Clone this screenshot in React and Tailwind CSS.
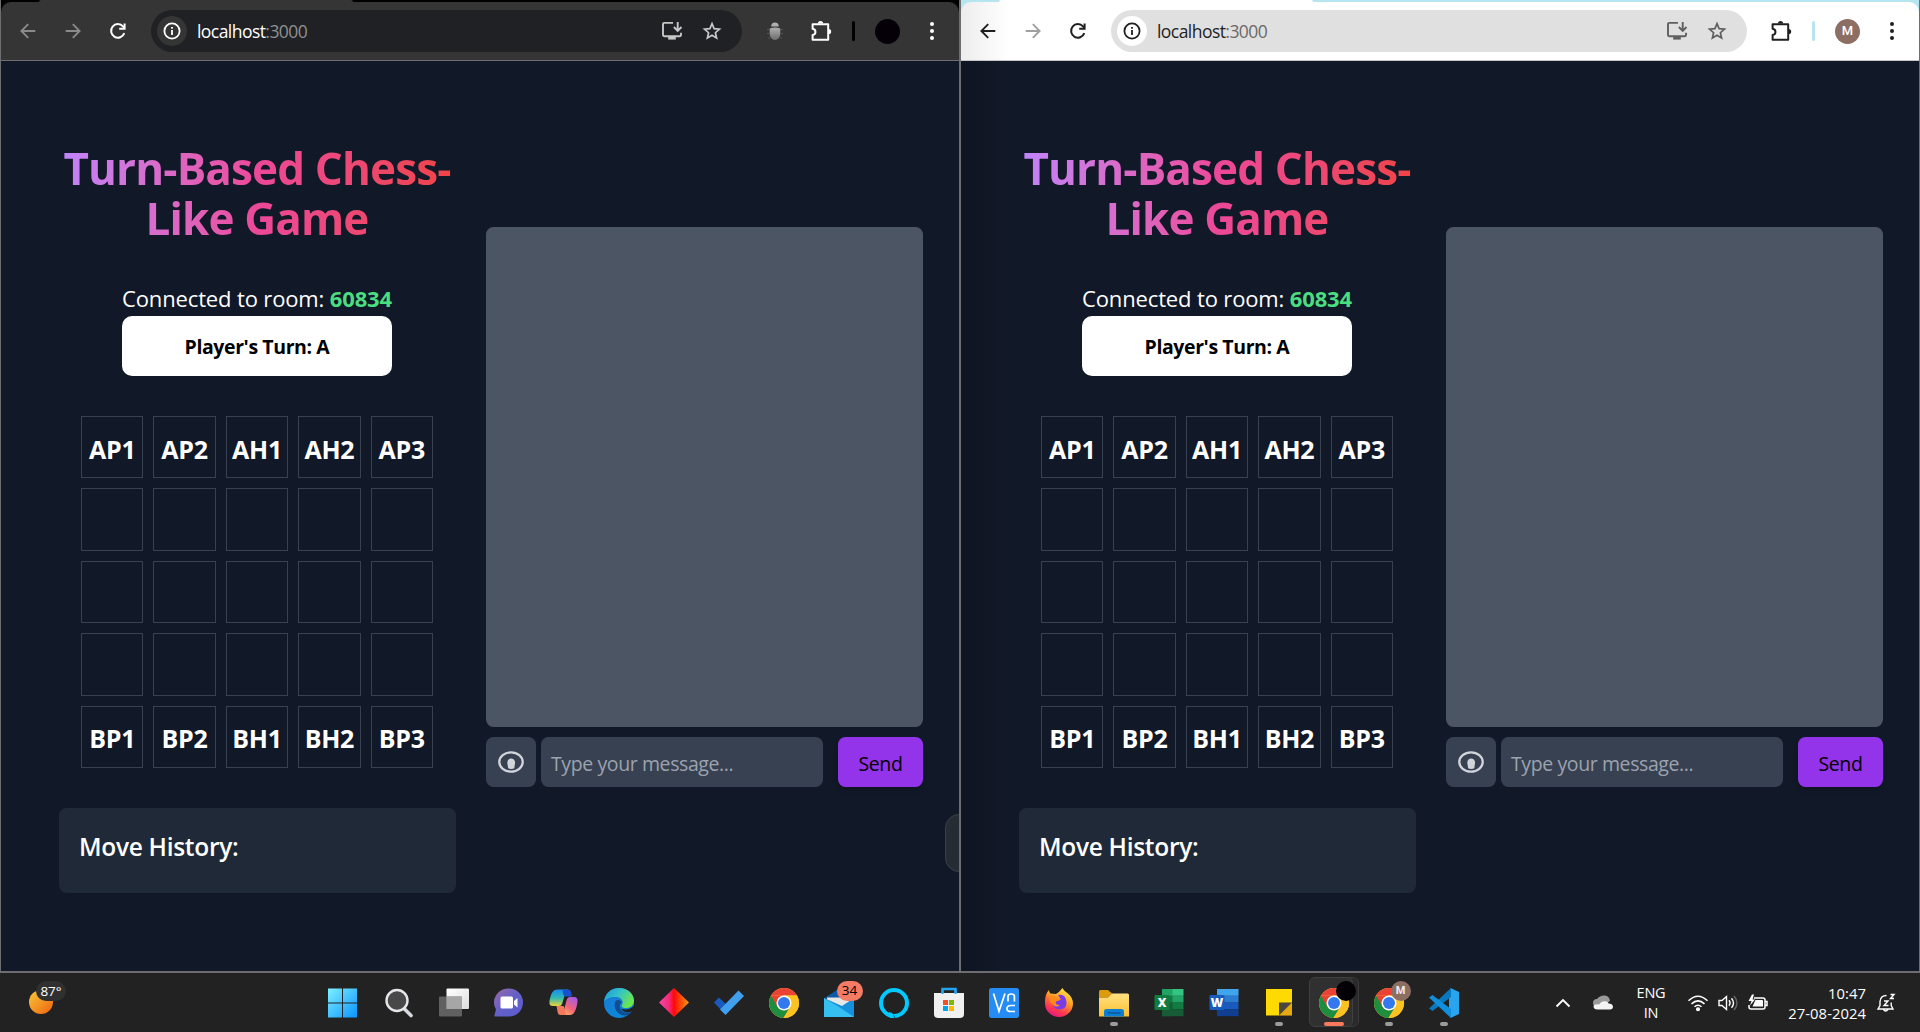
import React from "react";

const ROWS = [
  ["AP1", "AP2", "AH1", "AH2", "AP3"],
  ["", "", "", "", ""],
  ["", "", "", "", ""],
  ["", "", "", "", ""],
  ["BP1", "BP2", "BH1", "BH2", "BP3"],
];

/* ---------- browser toolbar icons ---------- */

function Arrow({ className, flip }) {
  return (
    <svg viewBox="0 0 20 20" className={`h-5 w-5 shrink-0 ${className} ${flip ? "-scale-x-100" : ""}`} fill="none" stroke="currentColor" strokeWidth="1.9">
      <path d="M17.3 10H3.8M10.2 3.2 3.4 10l6.8 6.8" />
    </svg>
  );
}

function Reload() {
  return (
    <svg viewBox="0 0 20 20" className="h-5 w-5 shrink-0" fill="none" stroke="currentColor" strokeWidth="2">
      <path d="M16.3 12.2A6.8 6.8 0 1 1 15 5.4l1.2 1.4" />
      <path d="M16.6 2.4v5.4h-5.4" />
    </svg>
  );
}

function Info() {
  return (
    <svg viewBox="0 0 20 20" className="h-5 w-5" fill="none" stroke="currentColor" strokeWidth="1.8">
      <circle cx="10" cy="10" r="7.6" />
      <path d="M10 9v5M10 5.9v1.9" />
    </svg>
  );
}

function Install() {
  return (
    <svg viewBox="0 0 22 20" className="h-5 w-[22px]" fill="none" stroke="currentColor" strokeWidth="1.9">
      <path d="M12 1.9H3.2a1.2 1.2 0 0 0-1.2 1.2v11a1.2 1.2 0 0 0 1.2 1.2h15.6a1.2 1.2 0 0 0 1.2-1.2v-2.4" />
      <path d="M16.7 1v8.4M12.9 6l3.8 3.8L20.5 6" />
      <path d="M7.2 17.3h7.6" strokeWidth="2.6" />
    </svg>
  );
}

function Star() {
  return (
    <svg viewBox="0 0 20 20" className="h-5 w-5" fill="none" stroke="currentColor" strokeWidth="1.7">
      <path d="m10 2.6 2.1 5 5.4.5-4.1 3.6 1.2 5.3-4.6-2.8L5.400 17l1.2-5.300L2.500 8.100l5.400-.5z" />
    </svg>
  );
}

function Puzzle() {
  return (
    <svg viewBox="0 0 22 22" className="h-[22px] w-[22px]">
      <path d="M2.600 4.200h15.600v15.600H2.600v-4.800c3.800-.6 3.800-5.600 0-6.200z" fill="none" stroke="currentColor" strokeWidth="2" strokeLinejoin="round" />
      <path d="M7.900 3.600a2.600 2.600 0 0 1 5.200 0zM18.600 8.900a2.600 2.600 0 0 1 0 5.200z" fill="currentColor" />
    </svg>
  );
}

function Bug() {
  return (
    <svg viewBox="0 0 18 20" className="h-5 w-[18px]">
      <defs><linearGradient id="bug" x1="0" y1="0" x2="0" y2="1"><stop stopColor="#b0b0b0" /><stop offset="1" stopColor="#6c6c6c" /></linearGradient></defs>
      <path d="M5.200 5.400a3.800 3.900 0 0 1 7.600 0z" fill="#b0b0b0" />
      <path d="M3.700 7.600q5.300-2.200 10.600 0v4.600c0 9-10.600 9-10.600 0z" fill="url(#bug)" />
      <path d="M1 8.500h2M1 12.500h2M2 17h2M15 8.500h2M15 12.500h2M14 17h2" stroke="#555" strokeWidth="1" />
    </svg>
  );
}

function Toolbar({ dark }) {
  return (
    <div className={`flex h-[61px] shrink-0 flex-col border-b ${dark ? "border-[#6e6e6e] bg-black" : "border-[#c6c6c6] bg-[#b5e6ef]"}`}>
      <div className="flex h-[2px] shrink-0 pl-[38px]">
        <div className={`h-full w-[314px] rounded-t-sm ${dark ? "bg-[#353535]" : "bg-white"}`} />
      </div>
      <div className={`flex h-[58px] items-center rounded-t-[10px] ${dark ? "bg-[#353535] text-white" : "bg-linear-to-r from-[#ededed] via-white via-5% to-white text-[#1f1f1f]"}`}>
        <Arrow className={`ml-[17px] ${dark ? "text-[#8a8a8a]" : "text-[#1f1f1f]"}`} />
        <Arrow flip className={`ml-[25px] ${dark ? "text-[#8a8a8a]" : "text-[#a0a0a0]"}`} />
        <div className="ml-[25px]"><Reload /></div>
        <div className={`ml-[23px] flex h-[42px] items-center rounded-full pl-1.5 ${dark ? "w-[591px] bg-[#202124]" : "w-[636px] bg-[#e0e0e0]"}`}>
          <span className={`flex h-[30px] w-[30px] items-center justify-center rounded-full ${dark ? "bg-[#353535]" : "bg-white"}`}><Info /></span>
          <span className="ml-[10px] grow font-['Open_Sans'] text-[17.5px] tracking-[-0.55px]">
            localhost<span className={dark ? "text-[#8f8f8f]" : "text-[#6a6a6a]"}>:3000</span>
          </span>
          <span className={`flex items-center gap-[19px] pr-5 ${dark ? "text-[#c7c7c7]" : "text-[#5f5f5f]"}`}><Install /><Star /></span>
        </div>
        <div className={`flex w-[35px] justify-end ${dark ? "ml-[7px]" : "hidden"}`}><Bug /></div>
        <div className={dark ? "ml-[26px]" : "ml-[23px]"}><Puzzle /></div>
        <div className={`ml-5 h-5 w-[3px] rounded ${dark ? "bg-black" : "bg-[#b5e6ef]"}`} />
        <div className={`ml-5 flex h-[25px] w-[25px] items-center justify-center rounded-full font-[Roboto] text-[13px] font-medium ${dark ? "bg-[#050008]" : "bg-[#8d6e63] text-white"}`}>
          {dark ? "" : "M"}
        </div>
        <div className="ml-[30px] flex w-1 flex-col gap-[3px]">
          <i className="h-1 w-1 rounded-full bg-current" /><i className="h-1 w-1 rounded-full bg-current" /><i className="h-1 w-1 rounded-full bg-current" />
        </div>
      </div>
    </div>
  );
}

/* ---------- game page ---------- */

function Game({ dark }) {
  return (
    <div className="relative flex grow overflow-hidden bg-[#111827] font-['Open_Sans',sans-serif] text-white">
      <section className="ml-[58px] flex w-[396px] shrink-0 flex-col items-center pt-[82px]">
        <h1 className="bg-linear-to-r from-[#c084fc] via-[#ec4899] to-[#ef4444] bg-clip-text px-1 text-center text-[44px] leading-[50px] font-bold tracking-[-0.85px] whitespace-nowrap text-transparent">
          Turn-Based Chess-<br />Like Game
        </h1>
        <p className="mt-[38px] text-[22px] leading-[35px] tracking-[-0.14px] whitespace-nowrap">
          Connected to room: <b className="text-[#4ade80]">60834</b>
        </p>
        <div className="flex h-[60px] w-[270px] items-center justify-center rounded-[10px] bg-white pt-0.5 text-[19.5px] font-bold tracking-[-0.4px] text-black">Player's Turn: A</div>
        <div className="mt-10 grid h-[352px] w-[352px] grid-cols-5 grid-rows-5 gap-[10px]">
          {ROWS.flat().map((t, i) => (
            <div key={i} className="flex items-center justify-center border border-[#374151] pt-1 text-[25px] leading-none font-bold tracking-[-0.25px]">{t}</div>
          ))}
        </div>
        <div className="mt-10 flex h-[85px] w-[397px] shrink-0 self-start rounded-[7.5px] bg-[#1f2937] pt-[21px] pl-5 text-[24.5px] leading-[35px] font-semibold tracking-[-0.3px]">Move History:</div>
      </section>
      <section className="ml-[31px] w-[437px] pt-[166px]">
        <div className="h-[500px] rounded-[7.5px] bg-[#4b5563]" />
        <div className="mt-[10px] flex h-[50px] text-[19.5px]">
          <button className="flex w-[50px] items-center justify-center rounded-[7.5px] bg-[#374151]">
            <svg viewBox="0 0 26 22" className="h-[22px] w-[26px]">
              <ellipse cx="13" cy="11" rx="11.700" ry="9.600" fill="none" stroke="#d1d5db" strokeWidth="2.300" />
              <path d="M9.300 11.500c.2-5.400 7.600-5.400 7.800 0 .1 2-.7 2.900-.7 5.800q-3.200 1.300-6.300 0c0-2.500-.8-3.600-.8-5.800z" fill="#d1d5db" />
            </svg>
          </button>
          <div className="ml-[5px] flex w-[282px] items-center rounded-[7.5px] bg-[#374151] pt-[3px] pl-[10px] tracking-[-0.4px] text-[#9ca3af]">Type your message...</div>
          <button className="ml-[15px] w-[85px] rounded-[7.5px] bg-[#9333ea] pt-[3px] tracking-[-0.4px] text-black shadow-md">Send</button>
        </div>
      </section>
      {dark ? (
        <div className="absolute top-[753px] -right-4 h-[58px] w-[30px] rounded-[14px] border border-[#3a4146] bg-[#262c33]" />
      ) : (
        <div className="absolute inset-y-0 left-0 w-10 bg-linear-to-r from-black/15 to-transparent" />
      )}
    </div>
  );
}

function Browser({ dark }) {
  return (
    <div className="flex h-[973px] w-[960px] flex-col border-x border-b-2 border-[#6e6e72]">
      <Toolbar dark={dark} />
      <Game dark={dark} />
    </div>
  );
}

/* ---------- taskbar icons, drawn on a 32px grid ---------- */

function Svg({ children }) {
  return <svg viewBox="0 0 32 32" className="h-8 w-8">{children}</svg>;
}

const Start = () => (
  <Svg>
    <defs>
      <linearGradient id="win" x1="0" y1="0" x2="1" y2="1" gradientUnits="objectBoundingBox"><stop stopColor="#7df0ff" /><stop offset="1" stopColor="#0a93ff" /></linearGradient>
    </defs>
    <path d="M2 1.500h14v14H2zM17 1.500h14v14H17zM2 16.500h14v14H2zM17 16.500h14v14H17z" fill="url(#win)" />
  </Svg>
);
const Search = () => (
  <Svg>
    <path d="m21.500 22 6.500 6.500" stroke="#d6d9de" strokeWidth="3.600" strokeLinecap="round" />
    <circle cx="14" cy="13.500" r="10.500" fill="#484848" stroke="#e4e6ea" strokeWidth="2.400" />
  </Svg>
);
const TaskView = () => (
  <Svg>
    <defs><linearGradient id="tv" x1="0" y1="0" x2="1" y2="1"><stop stopColor="#fff" /><stop offset="1" stopColor="#dedede" /></linearGradient></defs>
    <rect x="8.500" y="1.500" width="22.500" height="20.500" rx="1" fill="url(#tv)" />
    <rect x="1" y="9.500" width="23" height="20" rx="1" fill="#6b6b6b" fillOpacity=".85" />
    <path d="M8.500 9.500H24V22H8.500z" fill="#a6a6a6" />
  </Svg>
);
const Chat = () => (
  <Svg>
    <defs><linearGradient id="chat" x1="0" y1="0" x2="1" y2="1"><stop stopColor="#9a6aa4" /><stop offset=".5" stopColor="#6460c8" /><stop offset="1" stopColor="#5a5bd0" /></linearGradient></defs>
    <path d="M16 1.500a14 14 0 0 1 0 28H2q-.8 0-.5-1.500l1.500-5.500A14 14 0 0 1 16 1.500z" fill="url(#chat)" />
    <rect x="7.500" y="9.500" width="12.500" height="12" rx="1.500" fill="#fff" />
    <path d="m21 14 3.500-3v9.500L21 17.500z" fill="#fff" />
  </Svg>
);
const Copilot = () => (
  <Svg>
    <defs>
      <linearGradient id="cpa" x1="0" y1="0" x2="0" y2="1"><stop stopColor="#1a8df2" /><stop offset=".5" stopColor="#2fb7b5" /><stop offset="1" stopColor="#e8d33a" /></linearGradient>
      <linearGradient id="cpb" x1=".8" y1="0" x2=".2" y2="1"><stop stopColor="#a45ae8" /><stop offset=".55" stopColor="#f0627c" /><stop offset="1" stopColor="#ffb257" /></linearGradient>
    </defs>
    <path d="M9.500 2.500H20q-2 1-3 5l-2.800 9Q13.500 19 11 19H4.500c-3.500 0-3.500-3.500-2.500-7.500S4.500 2.500 9.500 2.500z" fill="url(#cpa)" />
    <path d="M14.500 2.500H20q2.700 0 3.200 3l.8 4h-6.500q-2.500 0-3-7z" fill="#1a50cf" />
    <path d="M22 28H12.500q2.500-1 3.500-5l2.500-9.500Q19.300 10 22 10h4.500c3.500 0 3.500 4 2.500 8s-2.500 10-7 10z" fill="url(#cpb)" />
    <path d="M18 28h-5.500Q10 28 9.500 24.500L8.500 19H15q1.500 0 1.200 3z" fill="#f4795c" />
  </Svg>
);
const Edge = () => (
  <Svg>
    <defs>
      <linearGradient id="ea" x1="0" y1="0" x2="1" y2=".5"><stop stopColor="#1895dc" /><stop offset=".5" stopColor="#35c1c8" /><stop offset="1" stopColor="#6ae650" /></linearGradient>
      <linearGradient id="eb" x1="0" y1="0" x2="0" y2="1"><stop stopColor="#1d78d4" /><stop offset="1" stopColor="#0b87da" /></linearGradient>
    </defs>
    <circle cx="16" cy="16" r="15" fill="url(#eb)" />
    <path d="M1 15C2 6 8 1 16 1c9 0 15 6 15 12.500 0 5-3.500 7.500-8 7.500-3.500 0-5-1.500-4-3 2-3 0-7.500-5.500-8C8 9.500 3 11 1 15z" fill="url(#ea)" />
    <path d="M12.500 14c-2.800 7 2 14.500 9.500 14.500 3 0 5.500-1.500 7-4-5 2-10.500 1-12-3.500-.8-2.600.5-4.500 1.800-6-1.500-2-4.500-3-6.300-1z" fill="#114e91" />
    <path d="M29.300 24.300c-4.500 1.700-9.500 1-11.500-3 1 1.500 9 2.500 12.700-2.500L32 22z" fill="#222" />
  </Svg>
);
const Diamond = () => (
  <Svg>
    <defs><linearGradient id="dia"><stop stopColor="#f94a9f" /><stop offset=".33" stopColor="#f32a80" /><stop offset=".5" stopColor="#ff0808" /><stop offset="1" stopColor="#ff9a10" /></linearGradient></defs>
    <path d="M16 1 31 15.500 16 30 1 15.500z" fill="url(#dia)" />
  </Svg>
);
const Todo = () => (
  <Svg>
    <path d="m1 15.500 5-5 9 8.500-5 6z" fill="#185abd" />
    <path d="M7 22.500 25.500 3.500l5.500 5.500-18.500 19z" fill="#41a0ee" />
  </Svg>
);
const ChromeIcon = () => (
  <Svg>
    <circle cx="16" cy="16" r="15" fill="#fcc934" />
    <path d="M3 8.500A15 15 0 0 1 29 8.500H16z" fill="#ea4335" />
    <path d="M3 8.500a15 15 0 0 0 12.500 22.500L22.500 19.500 16 22z" fill="#1e8e3e" />
    <path d="M3 8.500 9.500 19.700 16 8.500z" fill="#ea4335" />
    <path d="M16 8.500h13a15 15 0 0 1-13.500 22.500l7-11.500z" fill="#fcc221" />
    <circle cx="16" cy="16" r="7.500" fill="#fff" />
    <circle cx="16" cy="16" r="6" fill="#3478f0" />
  </Svg>
);
const Mail = () => (
  <Svg>
    <path d="m1 11.500 15-10 15 10z" fill="#0d5ba8" />
    <path d="M4 10.500h24V22H4z" fill="#e6e6e6" />
    <path d="M1 11v19h30V11L19 19z" fill="#1590dc" />
    <path d="M1 11v19h30L16 20z" fill="#36c0f2" />
  </Svg>
);
const Alexa = () => (
  <Svg>
    <circle cx="16" cy="16" r="13" fill="none" stroke="#00caff" strokeWidth="4" />
    <path d="M14 25.500v5l2.500.5V29z" fill="#222" />
    <path d="M11 25c4 1 5 2.500 5 6-3 .5-6-1-7-2z" fill="#00caff" />
  </Svg>
);
const Store = () => (
  <Svg>
    <path d="M9.500 7V2h13v5" fill="none" stroke="#21a7ef" strokeWidth="2.500" />
    <path d="M1 6h30v21q0 4-4 4H5q-4 0-4-4z" fill="#f0f0f0" />
    <path d="M9.500 3v4M22.500 3v4" stroke="#21a7ef" strokeWidth="2" />
    <path d="M10 13h5v5h-5z" fill="#f25022" /><path d="M16 13h5v5h-5z" fill="#7fba00" />
    <path d="M10 19h5v5h-5z" fill="#00a4ef" /><path d="M16 19h5v5h-5z" fill="#ffb900" />
  </Svg>
);
const Vnc = () => (
  <Svg>
    <rect x="1" y="1" width="30" height="30" rx="2.500" fill="#258cf4" />
    <g fill="none" stroke="#fff" strokeWidth="1.700"><path d="M5.500 6.500 11 24.300 17 6.500" /><path d="M20 14.500V9.300q0-2.300 3.200-2.300t3.200 2.300v5.200M27 18.500h-4q-4 0-4 3v.5q0 2.500 4 2.500h4" /></g>
  </Svg>
);
const Firefox = () => (
  <Svg>
    <defs><linearGradient id="ff" x1=".8" y1="0" x2=".3" y2="1"><stop stopColor="#fff04a" /><stop offset=".4" stopColor="#ffa125" /><stop offset=".75" stopColor="#ff3a4e" /><stop offset="1" stopColor="#e31587" /></linearGradient></defs>
    <path d="M19.500 1c1.500 2.500 2.500 3.500 6 6q4.500 4 4.500 9.500a14 13.500 0 0 1-28 0C2 10 3 6 6 3q0 2.500 1.500 3.500L13 7q3-1.500 6.500-6z" fill="url(#ff)" />
    <path d="M15 8q8-1.500 8.500 7.500 0 7-7.500 7-7-.5-6.500-7.500l4-.5L17.500 12z" fill="#7a3bea" />
    <path d="M6 11q4-3.500 8-1l4 2.500q-3 1.500-5 1.500c-1 3 1 4 4 4-3 3.500-9 1-11-7z" fill="#ff8a1c" />
  </Svg>
);
const Explorer = () => (
  <Svg>
    <defs><linearGradient id="ex" x1="0" y1="0" x2="0" y2="1"><stop stopColor="#ffe082" /><stop offset="1" stopColor="#fcc02e" /></linearGradient></defs>
    <path d="M1 4.500q0-1.500 1.500-1.500H10l4 3.500-4 4H1z" fill="#dc9c0a" />
    <path d="M1 10.500h9l4-4h15.500q1.500 0 1.500 1.500v21.500H1z" fill="url(#ex)" />
    <path d="M6 29.500v-5q0-2.500 2.500-2.500h15q2.500 0 2.500 2.500v5z" fill="#0d7fd2" />
    <path d="M9.500 26h13" stroke="#0959a0" strokeWidth="1.600" />
  </Svg>
);

function Office({ letter, colors }) {
  return (
    <svg viewBox="0 0 32 32" className="h-8 w-8">
      {colors.slice(0, 4).map((c, i) => <rect key={i} x="9" y={2 + i * 6.8} width="21.500" height="6.800" fill={c} />)}
      {letter === "X" && <><rect x="9" y="2" width="10.500" height="6.800" fill="#21a366" /><rect x="9" y="8.800" width="10.500" height="6.800" fill="#107c41" /><rect x="9" y="15.600" width="10.500" height="13.600" fill="#185c37" /></>}
      <rect x="1.500" y="8" width="15" height="15" rx="1" fill={colors[4]} />
      <text x="9" y="20" textAnchor="middle" fontFamily="Open Sans" fontWeight="800" fontSize="12" fill="#fff">{letter}</text>
    </svg>
  );
}
const Excel = () => <Office letter="X" colors={["#33c481", "#21a366", "#107c41", "#185c37", "#107c41"]} />;
const Word = () => <Office letter="W" colors={["#41a5ee", "#2b7cd3", "#185abd", "#103f91", "#185abd"]} />;
const Notes = () => (
  <Svg>
    <path d="M3 2h26v13.500L16 28.500H3z" fill="#ffd902" />
    <path d="M16 15.500h13v13H16z" fill="#4b463d" />
    <path d="m16 28.500 13-13v13z" fill="#e6aa10" />
  </Svg>
);
const VsCode = () => (
  <Svg>
    <path d="M22.500 1 31 5v22l-8.500 4-1.500-6V7z" fill="#29a5f0" />
    <path d="M23 1v9L4.500 24 1 21.500z" fill="#0879be" />
    <path d="M23 31v-9L4.500 8 1 10.500z" fill="#128fda" />
  </Svg>
);

const APPS = [
  [Start, "start"], [Search], [TaskView], [Chat], [Copilot], [Edge], [Diamond], [Todo], [ChromeIcon], [Mail, "mail"], [Alexa],
  [Store], [Vnc], [Firefox], [Explorer, "run"], [Excel], [Word], [Notes, "run"], [ChromeIcon, "active"], [ChromeIcon, "profile"], [VsCode, "run"],
];

function TaskbarApp({ Icon, kind }) {
  const dot = kind === "run" || kind === "profile";
  return (
    <div className={`relative flex h-full w-[55px] shrink-0 items-center justify-center ${kind === "start" ? "mr-[2px]" : ""}`}>
      {kind === "active" && (
        <>
          <span className="absolute top-1 left-[9px] h-[50px] w-[43px] rounded-md border border-[#3a3a3a] bg-[#2a2a2a]" />
          <span className="absolute top-1 left-[2.500px] h-[50px] w-[44px] rounded-md border border-[#404040] bg-[#303030]" />
        </>
      )}
      <div className="relative"><Icon /></div>
      {kind === "mail" && <span className="absolute top-2 left-[25px] flex h-5 w-[26px] items-center justify-center rounded-full bg-[#f47c64] font-['Open_Sans'] text-[13.500px] leading-none text-black">34</span>}
      {kind === "active" && <span className="absolute top-2 left-[29px] h-5 w-5 rounded-full bg-[#030006]" />}
      {kind === "profile" && <span className="absolute top-2 left-[29px] flex h-5 w-5 items-center justify-center rounded-full bg-[#8d6e63] font-[Roboto] text-[11px] font-bold text-[#eee]">M</span>}
      {dot && <span className="absolute bottom-[6px] h-1 w-2 rounded-full bg-[#9b9b9b]" />}
      {kind === "active" && <span className="absolute bottom-[6px] h-1 w-5 rounded-full bg-[#f9795c]" />}
    </div>
  );
}

function Tray() {
  return (
    <div className="flex h-full items-center font-['Open_Sans'] text-[14.500px] leading-5 text-white">
      <svg viewBox="0 0 16 16" className="h-4 w-4" fill="none" stroke="#fff" strokeWidth="1.800"><path d="m1.500 11.500 6.500-6.500 6.500 6.500" /></svg>
      <svg viewBox="0 0 22 16" className="ml-[21px] h-4 w-[22px]">
        <path d="M5 12a4 4 0 0 1 0-8q3-4 8-3.500 4 .5 5 5L12 12z" fill="#9a9a9a" />
        <path d="M5 14.500c-3 0-4.500-3-2.500-4.500Q4 9 7 9.500q3-4.500 7.500-3 1.500.5 2 2 4 0 4.500 3 0 3-3 3z" fill="#f3f3f3" />
      </svg>
      <div className="ml-[22px] w-[30px] text-center tracking-[-0.200px]">ENG<br />IN</div>
      <svg viewBox="0 0 22 18" className="ml-[21px] h-[18px] w-[22px]" fill="none" stroke="#fff" strokeWidth="1.500">
        <path d="M1.500 6.800q9.500-9 19 0M4.500 9.900q6.500-6 13 0M7.500 12.800q3.500-3.200 7 0" /><circle cx="11" cy="15.200" r="1.300" fill="#fff" />
      </svg>
      <svg viewBox="0 0 22 18" className="ml-[8px] h-[18px] w-[22px]" fill="none" stroke="#fff" strokeWidth="1.400">
        <path d="M2 6.500h3L9.500 2.500v13L5 11.500H2zM12 6.300q2.200 2.700 0 5.400M14.500 4.200q4 4.800 0 9.600" /><path d="M17 2q6 7 0 14" stroke="#666" />
      </svg>
      <svg viewBox="0 0 22 18" className="ml-[8px] h-[18px] w-[22px]" fill="none" stroke="#fff" strokeWidth="1.500">
        <path d="M7 4h9q2 0 2 2v7q0 2-2 2H4q-2 0-2-2v-2M18.500 7.500h1.500v4h-1.500" /><path d="M8.500 6H15q1 0 1 1v5.500H5.500z" fill="#fff" stroke="none" /><path d="M5 .5 1.500 7h3L3 11.500 8 5.500H5.500L7 .5z" fill="#fff" stroke="none" />
      </svg>
      <div className="ml-[19px] w-[78px] text-right text-[14.800px] tracking-[0.050px] whitespace-nowrap">10:47<br />27-08-2024</div>
      <svg viewBox="0 0 20 20" className="ml-[10px] h-5 w-5" fill="none" stroke="#fff" strokeWidth="1.400">
        <path d="M10.500 2.500q-6 0-6.500 6v4l-2 3.500h15l-1.800-3.500v-3M7.500 16.500q2 3 4.500 0" /><path d="M8 8h4l-4 4.500h4.500M14.500 1.500h3.500l-3.500 4H18" />
      </svg>
    </div>
  );
}

function Taskbar() {
  return (
    <div className="flex h-[59px] w-full bg-[#222222]">
      <div className="relative w-[314.500px] shrink-0">
        <div className="absolute top-[17px] left-[29px] h-6 w-6 rounded-full bg-linear-to-br from-[#f5c83a] to-[#ee5e08]" />
        <div className="absolute top-2 left-9 flex h-5 w-[30px] items-center justify-center rounded-full bg-[#303030] font-['Open_Sans'] text-[13.500px] text-white">87°</div>
      </div>
      {APPS.map(([Icon, kind], i) => <TaskbarApp key={i} Icon={Icon} kind={kind} />)}
      <div className="ml-auto pr-6"><Tray /></div>
    </div>
  );
}

export default function App() {
  return (
    <div className="h-[1032px] w-[1920px] overflow-hidden bg-[#222222]">
      <div className="flex">
        <Browser dark />
        <Browser />
      </div>
      <Taskbar />
    </div>
  );
}
